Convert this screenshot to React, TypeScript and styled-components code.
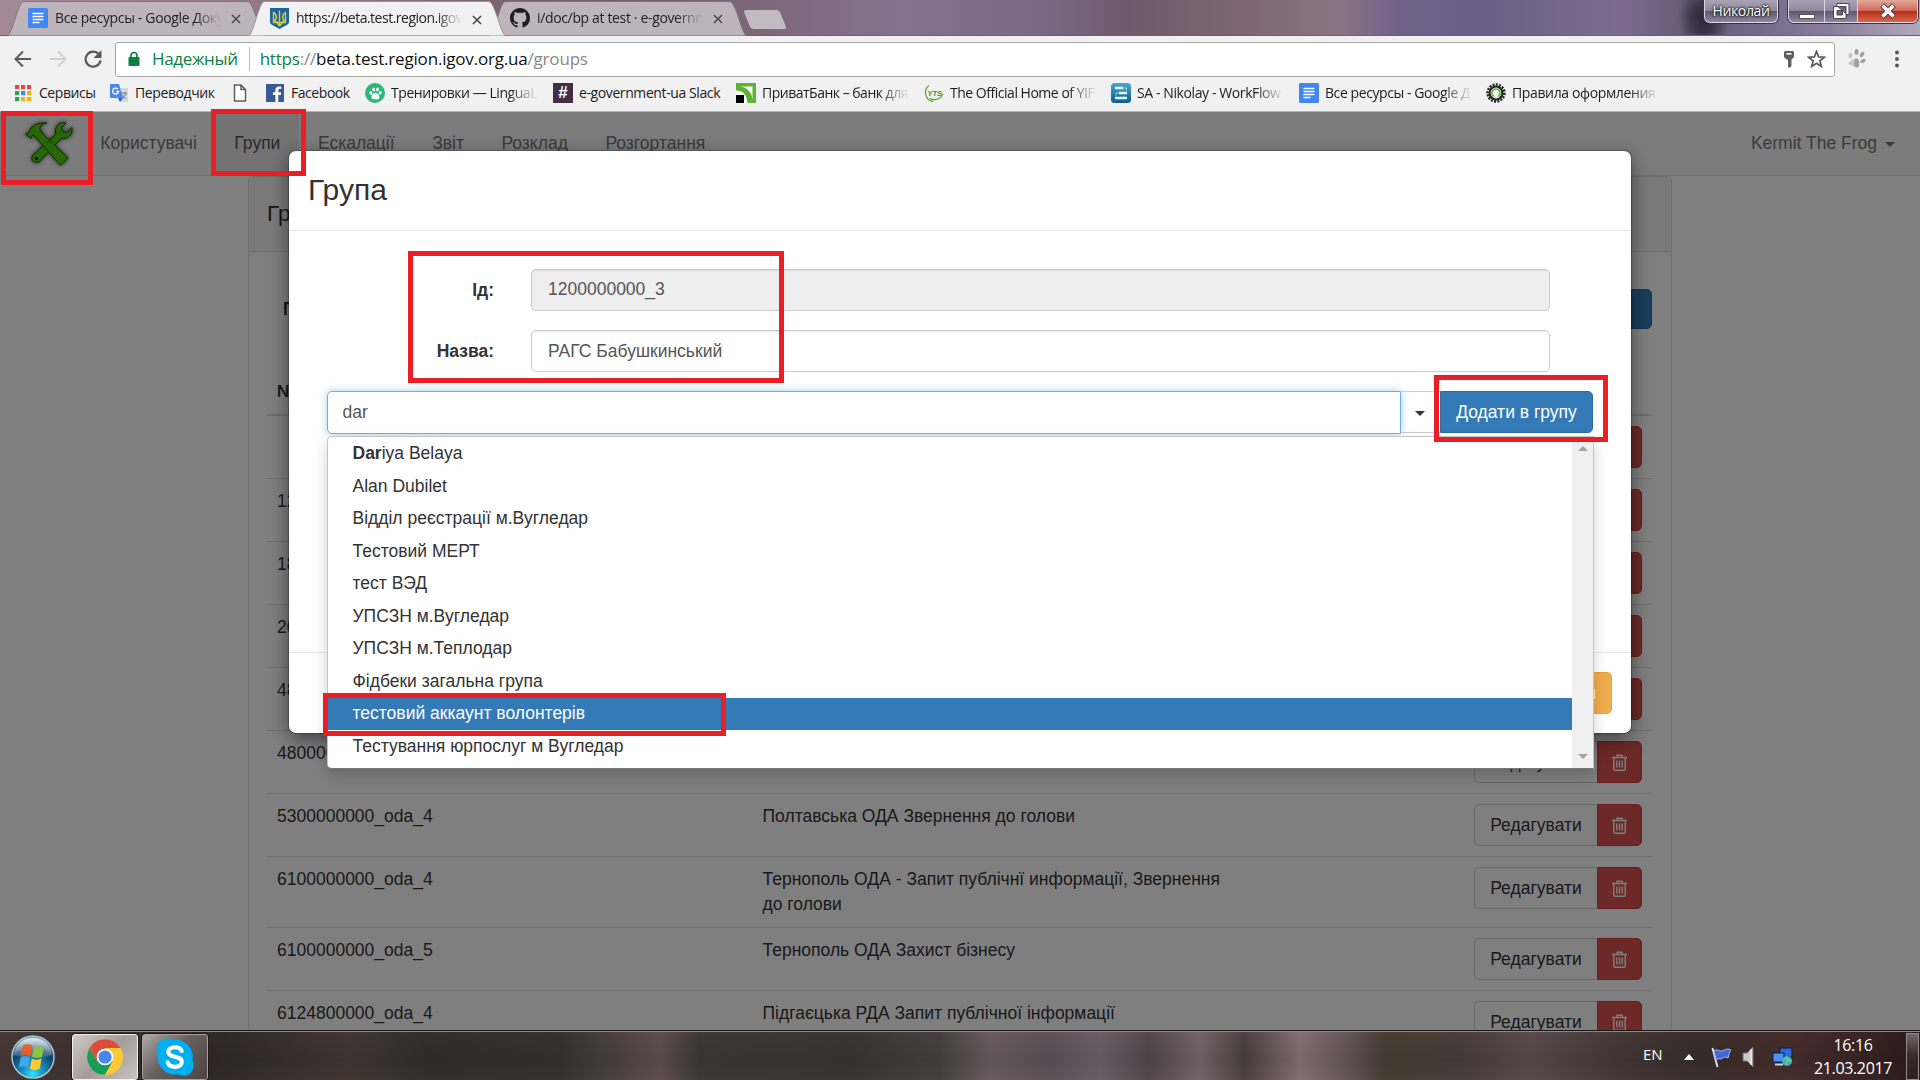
import React from 'react';
import styled, { createGlobalStyle, css } from 'styled-components';

const GlobalStyle = createGlobalStyle`
  * { box-sizing: border-box; }
  html, body { margin: 0; padding: 0; }
  body { width: 1920px; height: 1080px; overflow: hidden; background: #808080; }
`;

const uiFont = `"Open Sans", "Noto Sans", sans-serif`;
const pageFont = `"Liberation Sans", Arial, sans-serif`;

const Screen = styled.div`
  position: relative;
  width: 1920px;
  height: 1080px;
  overflow: hidden;
  display: flex;
  flex-direction: column;
`;

/* ---------- Window title bar and tabs ---------- */

const TitleBar = styled.div`
  height: 36px;
  flex: none;
  display: flex;
  align-items: flex-start;
  padding-left: 8px;
  border-bottom: 1px solid #6e6070;
  background:
    radial-gradient(ellipse 26px 34px at 1704px 18px, #2d2437 0, rgba(45, 36, 55, 0.7) 45%, transparent 100%),
    linear-gradient(90deg, #a58b96 0, #8b7280 350px, #6f5a69 600px, #7c6679 750px, #84738e 900px, #7a6984 1040px,
      #6d5a6c 1130px, #7d6672 1240px, #8a7585 1340px, #6f6088 1400px, #6b5f87 1490px, #7d6c8d 1620px, #665a75 1690px,
      #75698a 1760px, #8a7d9c 1830px, #b3a9bd 1920px);
`;

const Tab = styled.div<{ $active?: boolean; $overlap?: boolean }>`
  position: relative;
  flex: none;
  width: 256px;
  height: ${p => (p.$active ? 36 : 35)}px;
  margin-left: ${p => (p.$overlap ? -15 : 0)}px;
  z-index: ${p => (p.$active ? 2 : 1)};
  display: flex;
  align-items: center;
  padding: 0 0 0 19px;
`;

const TabShape = styled.svg`
  position: absolute;
  left: 0;
  top: 0;
  z-index: -1;
`;

const TabIcon = styled.span`
  width: 22px;
  display: flex;
  justify-content: center;
  flex: none;
`;

const TabTitle = styled.span<{ $ls?: number }>`
  width: 167px;
  margin-left: 6px;
  overflow: hidden;
  white-space: nowrap;
  font: 14px/20px ${uiFont};
  letter-spacing: ${p => p.$ls ?? 0}px;
  color: #222;
  mask-image: linear-gradient(90deg, #000 140px, transparent 166px);
`;

const TabClose = styled.svg`
  margin-left: 9px;
  margin-top: 3px;
  flex: none;
`;

const NewTab = styled.div`
  width: 36px;
  height: 19px;
  margin: 10px 0 0 1px;
  background: #c2bac1;
  border-radius: 3px;
  transform: skewX(22deg);
`;

const WindowControls = styled.div`
  margin-left: auto;
  display: flex;
  padding-right: 2px;
`;

const glass = css`
  background: linear-gradient(#aaa2b5 0, #8f879b 48%, #5e566e 50%, #8f87a2 100%);
  border: 1px solid #dcd6e2;
  border-top: 0;
  box-shadow: 0 0 0 1px #3c3444;
`;

const UserButton = styled.div`
  ${glass}
  width: 74px;
  height: 23px;
  margin-right: 10px;
  border-radius: 0 0 6px 6px;
  text-align: center;
  font: 14px/22px ${uiFont};
  letter-spacing: -0.4px;
  color: #fff;
  text-shadow: 0 0 3px #000, 0 0 2px #000;
`;

const ControlGroup = styled.div`
  ${glass}
  display: flex;
  height: 23px;
  border-radius: 0 0 6px 6px;
  overflow: hidden;
`;

const Control = styled.div<{ $w: number; $close?: boolean }>`
  width: ${p => p.$w}px;
  display: flex;
  align-items: center;
  justify-content: center;
  border-left: 1px solid #d8d2de;
  &:first-child { border-left: 0; }
  ${p => p.$close && css`background: linear-gradient(#e2a79a 0, #cf6a58 48%, #b52d18 50%, #d8674d 100%);`}
`;

/* ---------- Address bar and bookmarks ---------- */

const Toolbar = styled.div`
  height: 76px;
  flex: none;
  background: #f1f1f1;
  border-bottom: 1px solid #b2b2b2;
`;

const AddressRow = styled.div`
  height: 44px;
  display: flex;
  align-items: center;
  padding: 1px 0 0 13px;
`;

const NavIcon = styled.svg`
  flex: none;
  margin-right: 15px;
  &:nth-of-type(3) { margin-right: 12px; }
`;

const AddressBox = styled.div`
  width: 1720px;
  height: 35px;
  margin-top: 1px;
  display: flex;
  align-items: center;
  background: #fff;
  border: 1px solid #a6a6a6;
  border-radius: 3px;
  font: 17px/30px ${uiFont};
  white-space: nowrap;
`;

const Secure = styled.span`
  padding-right: 11px;
  line-height: 24px;
  letter-spacing: -0.35px;
  color: #0b8043;
  border-right: 1px solid #bbb;
`;

const Url = styled.span`
  margin-left: 10px;
  letter-spacing: -0.19px;
  color: #888;
  b { font-weight: 400; color: #111; }
  i { font-style: normal; color: #0b8043; }
`;

const BoxIcons = styled.span`
  margin-left: auto;
  padding-right: 8px;
  display: flex;
  gap: 13px;
  align-items: center;
`;

const ToolbarIcons = styled.div`
  display: flex;
  align-items: center;
  margin-left: 13px;
  gap: 28px;
`;

const BookmarkRow = styled.div`
  height: 26px;
  display: flex;
  padding-left: 13px;
`;

const Bookmark = styled.div<{ $w: number }>`
  flex: none;
  width: ${p => p.$w}px;
  display: flex;
  align-items: center;
`;

const BookmarkIcon = styled.span`
  width: 20px;
  height: 20px;
  flex: none;
  display: flex;
  align-items: center;
  justify-content: center;
`;

const BookmarkText = styled.span<{ $ls: number; $fade?: boolean }>`
  margin-left: 6px;
  width: 146px;
  overflow: hidden;
  white-space: nowrap;
  font: 14px/22px ${uiFont};
  letter-spacing: ${p => p.$ls}px;
  color: #1c1c1c;
  ${p => p.$fade && css`mask-image: linear-gradient(90deg, #000 118px, transparent 147px);`}
`;

/* ---------- Web page ---------- */

const Page = styled.div`
  position: relative;
  flex: none;
  height: 918px;
  overflow: hidden;
  background: #fff;
  font: 17.5px/25px ${pageFont};
  color: #333;
`;

const Navbar = styled.div`
  height: 64px;
  display: flex;
  background: #f8f8f8;
  border-bottom: 1px solid #e0e0e0;
`;

const Brand = styled.div`
  width: 81.5px;
  padding: 4px 0 0 21px;
`;

const NavItem = styled.div<{ $active?: boolean }>`
  padding: 18.75px 18.75px 0;
  color: ${p => (p.$active ? '#555' : '#777')};
  background: ${p => (p.$active ? '#e7e7e7' : 'none')};
`;

const NavUser = styled(NavItem)`
  margin-left: auto;
  padding-right: 25px;
  display: flex;
  gap: 8px;
`;

const Caret = styled.span`
  margin-top: 11px;
  width: 0;
  height: 0;
  border: 5px solid transparent;
  border-top-color: currentColor;
  border-bottom: 0;
`;

const Panel = styled.div`
  width: 1424px;
  margin-left: 248px;
  border: 1px solid #ddd;
  border-radius: 5px;
`;

const PanelHeading = styled.div`
  height: 75px;
  padding: 24px 18px;
  background: #f5f5f5;
  border-bottom: 1px solid #ddd;
  font-size: 22.5px;
`;

const PanelBody = styled.div`
  padding: 37px 19px 0 18px;
`;

const SearchRow = styled.div`
  display: flex;
  justify-content: space-between;
  padding-left: 16px;
  height: 74px;
`;

const SearchLabel = styled.b`
  padding-top: 8px;
`;

const AddButton = styled.div`
  width: 150px;
  height: 40px;
  border-radius: 5px;
  background: #337ab7;
  border: 1px solid #2e6da4;
`;

const TableHead = styled.div`
  height: 53px;
  padding: 16px 10px 0;
  font-weight: 700;
  border-bottom: 2px solid #ddd;
`;

const Row = styled.div<{ $tall?: boolean }>`
  display: grid;
  grid-template-columns: 485.5px 470px 1fr;
  align-items: start;
  height: ${p => (p.$tall ? 71 : 63)}px;
  padding: 10px 10px 0;
  border-bottom: 1px solid #ddd;
`;

const RowActions = styled.div`
  display: flex;
  justify-content: flex-end;
`;

const EditButton = styled.div`
  width: 123px;
  height: 42px;
  text-align: center;
  line-height: 41px;
  background: #fff;
  border: 1px solid #ccc;
  border-right: 0;
  border-radius: 5px 0 0 5px;
`;

const DeleteButton = styled.div`
  width: 45px;
  height: 42px;
  display: flex;
  align-items: center;
  justify-content: center;
  background: #d9534f;
  border: 1px solid #d43f3a;
  border-radius: 0 5px 5px 0;
`;

const Backdrop = styled.div`
  position: absolute;
  inset: 0;
  background: rgba(0, 0, 0, 0.5);
`;

/* ---------- Modal ---------- */

const Modal = styled.div`
  position: absolute;
  left: 289px;
  top: 39px;
  width: 1342px;
  height: 582px;
  display: flex;
  flex-direction: column;
  background: #fff;
  border-radius: 7px;
  box-shadow: 0 6px 19px rgba(0, 0, 0, 0.5), 0 0 0 1px rgba(0, 0, 0, 0.2);
`;

const ModalHeader = styled.div`
  height: 80px;
  padding: 19px 19px 0;
  font-size: 30px;
  line-height: 40px;
  border-bottom: 1px solid #e5e5e5;
`;

const ModalBody = styled.div`
  flex: 1;
  padding: 38px 38px 0;
`;

const Field = styled.div`
  display: grid;
  grid-template-columns: 167px 1019px;
  column-gap: 37px;
  height: 61px;
`;

const FieldLabel = styled.b`
  text-align: right;
  padding-top: 9px;
`;

const Input = styled.div<{ $disabled?: boolean }>`
  height: 42px;
  padding: 0 16px;
  line-height: ${p => (p.$disabled ? 38 : 40)}px;
  color: #555;
  background: ${p => (p.$disabled ? '#eee' : '#fff')};
  border: 1px solid #ccc;
  border-radius: 5px;
  box-shadow: inset 0 1px 1px rgba(0, 0, 0, 0.075);
`;

const Combo = styled.div`
  display: flex;
  height: 43px;
`;

const ComboInput = styled.div`
  width: 1074px;
  height: 43px;
  padding-left: 14.5px;
  line-height: 41px;
  color: #555;
  border: 1px solid #66afe9;
  border-radius: 5px 0 0 5px;
  box-shadow: 0 0 9px rgba(102, 175, 233, 0.6);
`;

const ComboToggle = styled.div`
  width: 39px;
  height: 42px;
  display: flex;
  justify-content: center;
  padding: 8px 2px 0 0;
  border: 1px solid #ccc;
  border-width: 1px 0;
`;

const ComboAdd = styled.div`
  width: 153px;
  height: 42px;
  line-height: 40px;
  text-align: center;
  color: #fff;
  background: #337ab7;
  border: 1px solid #2e6da4;
  border-radius: 0 5px 5px 0;
`;

const MemberList = styled.div`
  width: 1267px;
  height: 131px;
  margin-top: 22px;
  border: 1px solid #bbb;
`;

const ModalFooter = styled.div`
  height: 81px;
  display: flex;
  justify-content: flex-end;
  padding: 19px 19px 0;
  border-top: 1px solid #e5e5e5;
`;

const CloseButton = styled.div`
  height: 42px;
  padding: 0 15px;
  line-height: 40px;
  color: #fff;
  background: #f0ad4e;
  border: 1px solid #eea236;
  border-radius: 5px;
`;

const Dropdown = styled.div`
  position: absolute;
  left: 327px;
  top: 324px;
  width: 1267px;
  height: 333px;
  display: flex;
  background: #fff;
  border: 1px solid #c4c4c4;
  border-bottom-color: #777;
  border-radius: 5px 0 0 5px;
  box-shadow: 0 7px 15px rgba(0, 0, 0, 0.18);
`;

const Options = styled.div`
  flex: 1;
  padding-top: 0.5px;
`;

const Option = styled.div<{ $selected?: boolean }>`
  height: 32.5px;
  padding: 3.75px 24.5px;
  color: ${p => (p.$selected ? '#fff' : '#333')};
  background: ${p => (p.$selected ? '#337ab7' : 'none')};
`;

const ScrollTrack = styled.div`
  width: 21px;
  display: flex;
  flex-direction: column;
  justify-content: space-between;
  align-items: center;
  padding: 9px 0;
  background: #f0f0f0;
`;

const Mark = styled.div<{ $x: number; $y: number; $w: number; $h: number }>`
  position: absolute;
  left: ${p => p.$x}px;
  top: ${p => p.$y}px;
  width: ${p => p.$w}px;
  height: ${p => p.$h}px;
  border: 5px solid #ea1f26;
  z-index: 5;
`;

/* ---------- Taskbar ---------- */

const Taskbar = styled.div`
  flex: none;
  height: 50px;
  display: flex;
  align-items: center;
  padding: 2px 1px 0 11px;
  border-top: 1px solid #1b1817;
  box-shadow: inset 0 1px 0 #8b8583;
  color: #fff;
  font-family: ${uiFont};
  background:
    linear-gradient(rgba(0, 0, 0, 0.05), rgba(0, 0, 0, 0.12) 60%, rgba(0, 0, 0, 0.05)),
    linear-gradient(90deg, #4a3b38 0, #332b28 210px, #453a33 350px, #35312d 430px, #38352f 560px, #63534f 660px,
      #403b37 700px, #3c3834 850px, #4b4343 940px, #6d6065 990px, #61555a 1050px, #70646b 1100px, #574b4e 1150px,
      #7a6a70 1200px, #4f4344 1245px, #8a767b 1300px, #6f5f61 1340px, #4a4037 1385px, #4c413b 1460px, #5d4e52 1530px,
      #463a38 1620px, #3b302c 1700px, #4a302e 1790px, #3a2524 1870px, #2c1d1b 1920px);
`;

const TaskButton = styled.div<{ $bright?: boolean }>`
  width: 66px;
  height: 46px;
  margin-right: 4px;
  display: flex;
  align-items: center;
  justify-content: center;
  border: 1px solid ${p => (p.$bright ? '#f4efec' : '#a8a09d')};
  border-radius: 3px;
  box-shadow: 0 0 0 1px #1f1a19;
  background: ${p =>
    p.$bright
      ? 'linear-gradient(135deg, #cfcac7, #a49c99 50%, #c9c3c0)'
      : 'linear-gradient(135deg, #b0aaa7, #67605e 45%, #4c4442)'};
`;

const Tray = styled.div`
  margin-left: auto;
  display: flex;
  align-items: center;
`;

const Language = styled.span`
  width: 41px;
  font-size: 15px;
  padding-bottom: 6px;
`;

const TrayIcon = styled.svg<{ $gap: number }>`
  margin-right: ${p => p.$gap}px;
  flex: none;
`;

const Clock = styled.div`
  width: 82px;
  margin-right: 12px;
  text-align: center;
  font-size: 16px;
  line-height: 23px;
  letter-spacing: -0.35px;
  white-space: nowrap;
`;

const ShowDesktop = styled.div`
  width: 13px;
  height: 47px;
  border: 1px solid #94898a;
  background: linear-gradient(#77696b, #3b2c2c 45%, #2c1e1e);
`;

/* ---------- Icons ---------- */

const DocsIcon = () => (
  <svg width="20" height="20" viewBox="0 0 20 20">
    <rect width="20" height="20" rx="1.5" fill="#4285f4" />
    <path d="M4.5 5.5h11M4.5 8.5h11M4.5 11.5h11M4.5 14.5h7" stroke="#fff" strokeWidth="1.6" />
  </svg>
);

const TridentIcon = () => (
  <svg width="21" height="21" viewBox="0 0 21 21">
    <path d="M1 0h19v14c0 3-5 4-9.500 7C6 18 1 17 1 14z" fill="#1c63a0" />
    <path d="M4.500 4v10.500h12V4M4.500 4c2.500 2 3 4 3 6.500l-2 2 3 2M16.500 4c-2.500 2-3 4-3 6.500l2 2-3 2M10.500 2.500v15M8 14c0 2 1 3 2.500 4 1.500-1 2.500-2 2.500-4" fill="none" stroke="#d9cc3c" strokeWidth="1.4" />
  </svg>
);

const GithubIcon = () => (
  <svg width="20" height="20" viewBox="0 0 16 16">
    <path fill="#1f1f23" d="M8 0C3.580 0 0 3.580 0 8c0 3.540 2.290 6.530 5.470 7.590.4.070.55-.17.55-.38 0-.19-.01-.82-.01-1.490-2.010.37-2.530-.49-2.690-.94-.09-.23-.48-.94-.82-1.130-.28-.15-.68-.52-.01-.53.63-.01 1.080.58 1.230.82.72 1.210 1.870.87 2.330.66.07-.52.28-.87.51-1.070-1.780-.2-3.640-.89-3.640-3.950 0-.87.31-1.590.82-2.150-.08-.2-.36-1.020.08-2.120 0 0 .67-.21 2.200.82.64-.18 1.320-.27 2-.27s1.360.09 2 .27c1.530-1.040 2.200-.82 2.200-.82.44 1.100.16 1.920.08 2.120.51.56.82 1.270.82 2.150 0 3.070-1.870 3.750-3.650 3.950.29.25.54.73.54 1.480 0 1.070-.01 1.930-.01 2.200 0 .21.15.46.55.38A8.010 8.010 0 0 0 16 8c0-4.420-3.580-8-8-8z" />
  </svg>
);

const CloseIcon = () => (
  <TabClose width="10" height="10" viewBox="0 0 10 10">
    <path d="M1 1l8 8M9 1l-8 8" stroke="#4a4a4a" strokeWidth="1.600" />
  </TabClose>
);

const PawIcon = ({ color, size = 17 }: { color: string; size?: number }) => (
  <svg width={size} height={size} viewBox="0 0 18 18" fill={color}>
    <ellipse cx="2.600" cy="8.500" rx="1.900" ry="2.600" transform="rotate(-20 2.600 8.500)" />
    <ellipse cx="6.500" cy="3.500" rx="1.900" ry="2.800" />
    <ellipse cx="11.800" cy="3.500" rx="1.900" ry="2.800" transform="rotate(12 11.800 3.500)" />
    <ellipse cx="15.500" cy="8" rx="1.900" ry="2.600" transform="rotate(30 15.500 8)" />
    <path d="M9 8c3 0 5.500 4 5.500 6.500S12 17.500 9 17s-5.500.5-5.500-2.500S6 8 9 8z" />
  </svg>
);

const ExtensionPawIcon = () => (
  <svg width="18" height="19" viewBox="0 0 18 19" fill="#a0a0a0">
    <ellipse cx="2.400" cy="6.500" rx="2" ry="2.700" fill="#c8c8c8" transform="rotate(12 2.400 6.500)" />
    <ellipse cx="8.500" cy="3" rx="2" ry="2.900" />
    <ellipse cx="14" cy="5.500" rx="1.800" ry="2.900" transform="rotate(35 14 5.500)" />
    <ellipse cx="15" cy="12" rx="1.800" ry="2.800" transform="rotate(62 15 12)" />
    <path d="M8.500 9.500C5 10 1 12.500.500 14.500c0 2 3 1.500 5 2.500l3 1.500z" fill="#c8c8c8" />
    <path d="M7 9.800c3-1 4.500 1.200 4 3.700-.3 2 1 4-1.500 5-1.500.3-3-1-3.500-2.500z" />
  </svg>
);

const AppsIcon = () => {
  const colors = ['#e0493e', '#e0493e', '#e0493e', '#2ba25c', '#4285f4', '#f2b400', '#2ba25c', '#f2b400', '#f2b400'];
  return (
    <svg width="18" height="18" viewBox="0 0 18 18">
      {colors.map((c, i) => (
        <rect key={i} x={1 + (i % 3) * 6} y={1 + Math.floor(i / 3) * 6} width="4.200" height="4.200" fill={c} />
      ))}
    </svg>
  );
};

const TranslateIcon = () => (
  <svg width="20" height="20" viewBox="0 0 20 20">
    <path d="M9 5h9a1 1 0 0 1 1 1v12a1 1 0 0 1-1 1h-6z" fill="#d5d8dc" />
    <path d="M12 10h6M15 9v1.500M17 10c-.5 3-2.500 4.500-4 5.500M13.500 12c1 1.500 2 2.500 3.500 3.500" stroke="#7a8590" fill="none" />
    <path d="M2 1h8l4 14H2a1 1 0 0 1-1-1V2a1 1 0 0 1 1-1z" fill="#4a86e8" />
    <path d="M9 15h5l-3 4z" fill="#2f5fc0" />
    <path d="M9 6.200a3 3 0 1 0 .6 2.300H7" stroke="#fff" strokeWidth="1.300" fill="none" />
  </svg>
);

const FileIcon = () => (
  <svg width="14" height="18" viewBox="0 0 14 18">
    <path d="M1.500 1h6.500l4.500 4.500V17h-11zM8 1v4.500h4.500" fill="#fff" stroke="#5f5f5f" strokeWidth="1.500" />
  </svg>
);

const FacebookIcon = () => (
  <svg width="18" height="20" viewBox="0 0 18 20">
    <rect y="1" width="18" height="18" fill="#3b5998" />
    <path d="M12.300 19v-7h2.400l.4-2.800h-2.800V7.500c0-.8.300-1.400 1.500-1.400h1.400V3.600C14.800 3.500 14 3.500 13.100 3.500c-2.200 0-3.700 1.300-3.700 3.700v2H7V12h2.400v7z" fill="#fff" />
  </svg>
);

const PawCircle = styled.span`
  width: 20px;
  height: 20px;
  border-radius: 50%;
  background: #2fb47a;
  display: flex;
  align-items: center;
  justify-content: center;
`;

const HashBox = styled.span`
  width: 20px;
  height: 20px;
  background: #452c47;
  color: #fff;
  text-align: center;
  font: bold 17px/20px ${pageFont};
`;

const PrivatIcon = () => (
  <svg width="20" height="20" viewBox="0 0 20 20">
    <rect width="20" height="20" fill="#5cb531" />
    <path d="M4 3.500h12.500V18C16.500 10 12 4.500 4 3.500z" fill="#fff" />
    <path d="M0 7.500c7 0 11 4.500 11.500 12.500H8V12H0z" fill="#fff" />
    <rect width="8" height="8" y="12" fill="#000" />
  </svg>
);

const YtsIcon = () => (
  <svg width="20" height="20" viewBox="0 0 20 20">
    <path d="M5 2.500C-1 7 1 17 9 18.500M6 15.500c5 3 12 0 12.500-5" fill="none" stroke="#59ab3e" strokeWidth="1.300" />
    <text x="3.500" y="12.500" fontSize="7.500" fontWeight="bold" fontStyle="italic" fontFamily="Liberation Sans" fill="#3f8f28">YTS</text>
  </svg>
);

const WorkflowIcon = () => (
  <svg width="20" height="20" viewBox="0 0 20 20">
    <defs>
      <linearGradient id="wf" x2="0" y2="1"><stop stopColor="#49a7cf" /><stop offset="1" stopColor="#0c5c8c" /></linearGradient>
    </defs>
    <rect width="20" height="20" rx="3.500" fill="url(#wf)" />
    <path d="M4 5h8M8 10h8M4 15h12" stroke="#e8f6fc" strokeWidth="2.400" />
    <path d="M12 5h3.500v2.500M5 12.500V10h3" stroke="#9fd4ea" fill="none" />
  </svg>
);

const GearIcon = () => (
  <svg width="20" height="20" viewBox="0 0 20 20">
    <circle cx="10" cy="10" r="8.500" fill="none" stroke="#222" strokeWidth="2.400" strokeDasharray="2 1.300" />
    <circle cx="10" cy="10" r="6.500" fill="#fff" stroke="#222" strokeWidth="2.200" />
    <path d="M8 13.400a4 4 0 1 1 4 0" fill="none" stroke="#6cc04a" strokeWidth="2" />
  </svg>
);

const ToolsIcon = () => (
  <svg width="56" height="52" viewBox="0 0 56 52">
    <defs>
      <filter id="glow" x="-20%" y="-20%" width="140%" height="140%">
        <feDropShadow dx="0" dy="0" stdDeviation="2" floodColor="#000" floodOpacity=".75" />
      </filter>
    </defs>
    <g filter="url(#glow)" fill="#4fce08" stroke="#1c5500" strokeWidth="1">
      <path d="M12 39L35 18c-2-5 1-11 7-11.500l3 .5-4.500 4.500 1 4 4 1 5.500-5c1 7-4 12-11 11L19 45c-5 4-11-1-7-6z" />
      <path d="M4.500 18l4.500-2.500c0-5 7-9.500 17-8.500-5 1-8 3-7 7l5 6 23 22-7.500 7.500L18 25l-5-5.500c-1.500-1-3 .5-3 3z" />
    </g>
    <circle cx="15.500" cy="42.500" r="1.700" fill="#123d00" />
    <path d="M26 27l5-5" stroke="#1c5500" />
  </svg>
);

const TrashIcon = () => (
  <svg width="15" height="17" viewBox="0 0 15 17" fill="none" stroke="#fff" strokeWidth="1.400">
    <path d="M0 3.500h15M5 3V1.200h5V3M1.800 4v11c0 .8.400 1.200 1.200 1.200h9c.8 0 1.200-.4 1.200-1.200V4M4.800 6.500v7M7.500 6.500v7M10.200 6.500v7" />
  </svg>
);

const StartOrb = styled.svg`
  flex: none;
  margin-right: 17px;
`;

/* ---------- Data ---------- */

const bookmarks: { icon: React.ReactNode; text?: string; w: number; ls?: number; fade?: boolean }[] = [
  { icon: <AppsIcon />, text: 'Сервисы', w: 96, ls: -0.45 },
  { icon: <TranslateIcon />, text: 'Переводчик', w: 121, ls: -0.4 },
  { icon: <FileIcon />, w: 35 },
  { icon: <FacebookIcon />, text: 'Facebook', w: 100, ls: -0.45 },
  { icon: <PawCircle><PawIcon color="#fff" size={13} /></PawCircle>, text: 'Тренировки — LinguaLeo', w: 188, ls: -0.45, fade: true },
  { icon: <HashBox>#</HashBox>, text: 'e-government-ua Slack', w: 183, ls: -0.4 },
  { icon: <PrivatIcon />, text: 'ПриватБанк – банк для тех', w: 188, ls: -0.5, fade: true },
  { icon: <YtsIcon />, text: 'The Official Home of YIFY', w: 187, ls: -0.48, fade: true },
  { icon: <WorkflowIcon />, text: 'SA - Nikolay - WorkFlow', w: 188, ls: -0.4, fade: true },
  { icon: <DocsIcon />, text: 'Все ресурсы - Google Док', w: 187, ls: -0.42, fade: true },
  { icon: <GearIcon />, text: 'Правила оформления си', w: 188, ls: -0.37, fade: true },
];

const rows: { id: string; name: string; tall?: boolean }[] = [
  { id: '', name: '' },
  { id: '1200000000_3', name: '' },
  { id: '1800000000_4', name: '' },
  { id: '2000000000_4', name: '' },
  { id: '4800000000_3', name: '' },
  { id: '4800000000_4', name: '' },
  { id: '5300000000_oda_4', name: 'Полтавська ОДА Звернення до голови' },
  { id: '6100000000_oda_4', name: 'Тернополь ОДА - Запит публічнї информації, Звернення до голови', tall: true },
  { id: '6100000000_oda_5', name: 'Тернополь ОДА Захист бізнесу' },
  { id: '6124800000_oda_4', name: 'Підгаєцька РДА Запит публічної інформації' },
];

const options: React.ReactNode[] = [
  <><b>Dar</b>iya Belaya</>,
  'Alan Dubilet',
  'Відділ реєстрації м.Вугледар',
  'Тестовий МЕРТ',
  'тест ВЭД',
  'УПСЗН м.Вугледар',
  'УПСЗН м.Теплодар',
  'Фідбеки загальна група',
  'тестовий аккаунт волонтерів',
  'Тестування юрпослуг м Вугледар',
];

const marks = [
  { x: 1, y: 111, w: 92, h: 74 },
  { x: 211, y: 109, w: 95, h: 67 },
  { x: 408, y: 251, w: 376, h: 132 },
  { x: 1434, y: 375, w: 174, h: 67 },
  { x: 323, y: 693, w: 403, h: 43 },
];

const BrowserTab = ({ icon, title, active, overlap, ls }: { icon: React.ReactNode; title: string; active?: boolean; overlap?: boolean; ls?: number }) => {
  const w = 256;
  return (
    <Tab $active={active} $overlap={overlap}>
      <TabShape width={w} height="36">
        <path
          d={`M0 35.500C5 31 10 3 15 1.500H${w - 16}C${w - 10} 3 ${w - 5} 31 ${w} 35.500`}
          fill={active ? '#f1f1f1' : '#beb5bc'}
          stroke={active ? '#9b929a' : '#7f757d'}
        />
      </TabShape>
      <TabIcon>{icon}</TabIcon>
      <TabTitle $ls={ls}>{title}</TabTitle>
      <CloseIcon />
    </Tab>
  );
};

export default function App() {
  return (
    <Screen>
      <GlobalStyle />
      <TitleBar>
        <BrowserTab icon={<DocsIcon />} title="Все ресурсы - Google Документы" ls={-0.35} />
        <BrowserTab icon={<TridentIcon />} title="https://beta.test.region.igov.org.ua" active overlap ls={-0.5} />
        <BrowserTab icon={<GithubIcon />} title="i/doc/bp at test · e-government" overlap ls={-0.35} />
        <NewTab />
        <WindowControls>
          <UserButton>Николай</UserButton>
          <ControlGroup>
            <Control $w={35}>
              <svg width="16" height="18"><rect x=".5" y="12.500" width="15" height="4" fill="#fff" stroke="#555" /></svg>
            </Control>
            <Control $w={33}>
              <svg width="18" height="18" viewBox="0 0 18 18">
                <path d="M5 1.500h12v11h-3v4H1.500v-12H5z" fill="#fff" stroke="#4a4455" />
                <path d="M5 4.500h9v8M5 8.500h5.500v4.500H5z" fill="#6b6379" stroke="#4a4455" />
              </svg>
            </Control>
            <Control $w={60} $close>
              <svg width="18" height="16" viewBox="0 0 18 16">
                <path d="M3 2l12 12M15 2L3 14" stroke="#5a3a3a" strokeWidth="5.500" />
                <path d="M3.500 2.500l11 11M14.500 2.500l-11 11" stroke="#fff" strokeWidth="3.600" />
              </svg>
            </Control>
          </ControlGroup>
        </WindowControls>
      </TitleBar>

      <Toolbar>
        <AddressRow>
          <NavIcon width="20" height="20" viewBox="0 0 20 20" fill="none" stroke="#5a5a5a" strokeWidth="2">
            <path d="M18 10H3M10 2.500L2.500 10l7.500 7.500" />
          </NavIcon>
          <NavIcon width="20" height="20" viewBox="0 0 20 20" fill="none" stroke="#cfcfcf" strokeWidth="2">
            <path d="M2 10h15M10 2.500l7.500 7.500-7.500 7.500" />
          </NavIcon>
          <NavIcon width="20" height="20" viewBox="0 0 20 20">
            <path d="M16 5.500a7.500 7.500 0 1 0 1.500 6" fill="none" stroke="#5a5a5a" strokeWidth="2.200" />
            <path d="M18.500 1v8h-8z" fill="#5a5a5a" />
          </NavIcon>
          <AddressBox>
            <svg width="36" height="16" viewBox="0 0 36 16">
              <rect x="12.500" y="6" width="11" height="9" rx="1" fill="#0b8043" />
              <path d="M15 7V4.500a3 3 0 0 1 6 0V7" fill="none" stroke="#0b8043" strokeWidth="1.700" />
            </svg>
            <Secure>Надежный</Secure>
            <Url><i>https</i>://<b>beta.test.region.igov.org.ua</b>/groups</Url>
            <BoxIcons>
              <svg width="10" height="17" viewBox="0 0 10 17">
                <path d="M1 0h8l1 1v5L7.500 8.500V15L6 16.500H4V8.500h-1.500L0 6V1z" fill="#5f5f5f" />
                <rect x="2.500" y="2" width="5" height="1.600" fill="#fff" />
              </svg>
              <svg width="19" height="18" viewBox="0 0 24 24" fill="none" stroke="#5a5a5a" strokeWidth="2.300">
                <path d="M12 2l2.800 7.200 7.700.4-6 4.900 2 7.500-6.500-4.200L5.500 22l2-7.500-6-4.900 7.700-.4z" />
              </svg>
            </BoxIcons>
          </AddressBox>
          <ToolbarIcons>
            <ExtensionPawIcon />
            <svg width="6" height="18" fill="#5a5a5a"><circle cx="3" cy="2.500" r="2" /><circle cx="3" cy="9" r="2" /><circle cx="3" cy="15.500" r="2" /></svg>
          </ToolbarIcons>
        </AddressRow>
        <BookmarkRow>
          {bookmarks.map((b, i) => (
            <Bookmark key={i} $w={b.w}>
              <BookmarkIcon>{b.icon}</BookmarkIcon>
              {b.text && <BookmarkText $ls={b.ls ?? 0} $fade={b.fade}>{b.text}</BookmarkText>}
            </Bookmark>
          ))}
        </BookmarkRow>
      </Toolbar>

      <Page>
        <Navbar>
          <Brand><ToolsIcon /></Brand>
          <NavItem>Користувачі</NavItem>
          <NavItem $active>Групи</NavItem>
          <NavItem>Ескалації</NavItem>
          <NavItem>Звіт</NavItem>
          <NavItem>Розклад</NavItem>
          <NavItem>Розгортання</NavItem>
          <NavUser>Kermit The Frog<Caret /></NavUser>
        </Navbar>
        <Panel>
          <PanelHeading>Групи</PanelHeading>
          <PanelBody>
            <SearchRow>
              <SearchLabel>Пошук:</SearchLabel>
              <AddButton />
            </SearchRow>
            <TableHead>№</TableHead>
            {rows.map((r, i) => (
              <Row key={i} $tall={r.tall}>
                <span>{r.id}</span>
                <span>{r.name}</span>
                <RowActions>
                  <EditButton>Редагувати</EditButton>
                  <DeleteButton><TrashIcon /></DeleteButton>
                </RowActions>
              </Row>
            ))}
          </PanelBody>
        </Panel>
        <Backdrop />
        <Modal>
          <ModalHeader>Група</ModalHeader>
          <ModalBody>
            <Field>
              <FieldLabel>Ід:</FieldLabel>
              <Input $disabled>1200000000_3</Input>
            </Field>
            <Field>
              <FieldLabel>Назва:</FieldLabel>
              <Input>РАГС Бабушкинський</Input>
            </Field>
            <Combo>
              <ComboInput>dar</ComboInput>
              <ComboToggle><Caret /></ComboToggle>
              <ComboAdd>Додати в групу</ComboAdd>
            </Combo>
            <MemberList />
          </ModalBody>
          <ModalFooter>
            <CloseButton>Закрити</CloseButton>
          </ModalFooter>
        </Modal>
        <Dropdown>
          <Options>
            {options.map((o, i) => (
              <Option key={i} $selected={i === 8}>{o}</Option>
            ))}
          </Options>
          <ScrollTrack>
            <svg width="10" height="5"><path d="M0 5h10L5 0z" fill="#a3a3a3" /></svg>
            <svg width="10" height="5"><path d="M0 0h10L5 5z" fill="#a3a3a3" /></svg>
          </ScrollTrack>
        </Dropdown>
      </Page>

      <Taskbar>
        <StartOrb width="44" height="44" viewBox="0 0 44 44">
          <defs>
            <radialGradient id="orb" cx=".5" cy=".9" r=".85">
              <stop stopColor="#2fe0ff" /><stop offset=".35" stopColor="#1583b5" /><stop offset=".7" stopColor="#0d3f66" /><stop offset="1" stopColor="#7fa3b8" />
            </radialGradient>
            <linearGradient id="shine" x2="0" y2="1"><stop stopColor="#fff" stopOpacity=".75" /><stop offset="1" stopColor="#fff" stopOpacity=".1" /></linearGradient>
          </defs>
          <circle cx="22" cy="22" r="21" fill="url(#orb)" stroke="#a9c3cf" strokeWidth="1.500" />
          <path d="M3 20C4 9 12 3 22 3s18 6 19 17c-10 4-28 4-38 0z" fill="url(#shine)" />
          <path d="M12 10.500c3-1.800 6-1.800 9.500.2L19.500 21c-3.300-2-6.300-1.800-9.500-.2z" fill="#e8602a" />
          <path d="M23 11.500c3.500 1.700 6.500 1.600 10-.2L31 21.700c-3.300 1.700-6.500 1.700-10 0z" fill="#8cc63f" />
          <path d="M9.700 22.500c3-1.800 6-1.800 9.500.2L17.200 33c-3.300-2-6.300-1.800-9.500-.2z" fill="#3fa9e8" />
          <path d="M20.700 23.500c3.500 1.700 6.500 1.600 10-.2l-2 10.400c-3.300 1.700-6.500 1.700-10 0z" fill="#fdc92f" />
        </StartOrb>
        <TaskButton $bright>
          <svg width="38" height="38" viewBox="0 0 48 48">
            <circle cx="24" cy="24" r="22.500" fill="#fbc936" />
            <path d="M4.500 12.700A22.500 22.500 0 0 0 24 46.500L33.700 29.600 24 24 14.300 29.600z" fill="#189d58" />
            <path d="M43.500 12.700H24v6l9.700 10.900L24 46.500A22.500 22.500 0 0 0 43.500 12.700z" fill="#fbc936" />
            <path d="M24 12.700h19.500A22.500 22.500 0 0 0 4.500 12.700L14.300 29.600z" fill="#dc4b3e" />
            <circle cx="24" cy="24" r="10.500" fill="#fff" />
            <circle cx="24" cy="24" r="8.300" fill="#4688f1" />
          </svg>
        </TaskButton>
        <TaskButton>
          <svg width="38" height="38" viewBox="0 0 24 24">
            <path d="M23 14.200a11 11 0 0 0-12.800-13A6.500 6.500 0 0 0 1.200 10a11 11 0 0 0 12.700 12.900A6.500 6.500 0 0 0 23 14.200z" fill="#00aff0" />
            <path d="M16.200 8.200C15.500 6.400 14 5.800 12 5.800c-2.500 0-4.200 1-4.200 2.900 0 4.200 8.500 2.200 8.500 6.300 0 2-1.800 3.200-4.300 3.200-2.300 0-4-.9-4.600-2.800" fill="none" stroke="#fff" strokeWidth="2.600" strokeLinecap="round" />
          </svg>
        </TaskButton>
        <Tray>
          <Language>EN</Language>
          <TrayIcon $gap={17} width="10" height="6"><path d="M0 6h10L5 0z" fill="#fff" /></TrayIcon>
          <TrayIcon $gap={10} width="21" height="22" viewBox="0 0 21 22">
            <path d="M1.500 2l5 19" stroke="#d9dde8" strokeWidth="2" />
            <path d="M3 5c4-3 5 1 8 0s4-3 9-1c-2 2-2 5-3 8-4-2-5 0-7 1-2 0-3-1-5 1z" fill="#3f67d6" stroke="#a9bdf2" />
          </TrayIcon>
          <TrayIcon $gap={16} width="14" height="22" viewBox="0 0 14 22">
            <path d="M1 7h4l6-6v20l-6-6H1z" fill="#c9c9c9" stroke="#6e6e6e" />
            <path d="M9 3v16" stroke="#fff" />
          </TrayIcon>
          <TrayIcon $gap={19} width="21" height="20" viewBox="0 0 21 20">
            <rect x="8" y="1" width="12" height="9" fill="#2c6be0" stroke="#0d1c3a" />
            <rect x="1" y="6" width="11" height="9" fill="#4d92f5" stroke="#0d1c3a" />
            <path d="M3 17.500h8" stroke="#c9d4e4" strokeWidth="2" />
            <circle cx="15" cy="14" r="5" fill="#3fa7d8" />
            <path d="M12 12c2-2 4-1 4 1s-2 2-2 5M17 12l2 3" stroke="#6fd05a" strokeWidth="1.800" fill="none" />
          </TrayIcon>
          <Clock>16:16<br />21.03.2017</Clock>
          <ShowDesktop />
        </Tray>
      </Taskbar>

      {marks.map((m, i) => (
        <Mark key={i} $x={m.x} $y={m.y} $w={m.w} $h={m.h} />
      ))}
    </Screen>
  );
}
